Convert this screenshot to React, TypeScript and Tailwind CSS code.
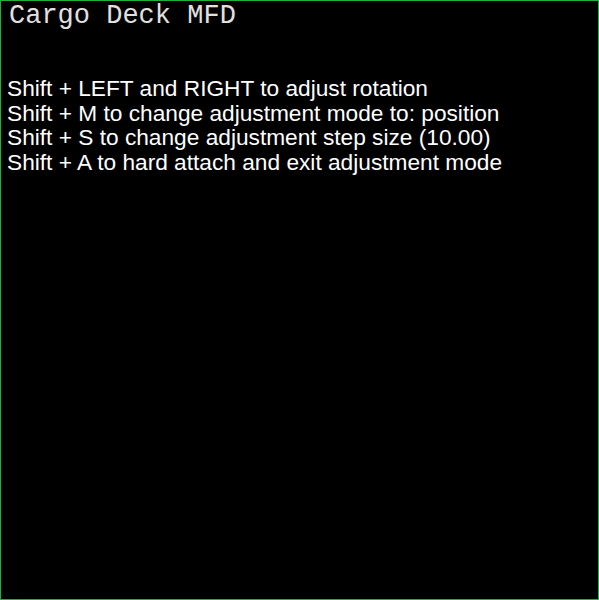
export default function App() {
  const lines = [
    'Shift + LEFT and RIGHT to adjust rotation',
    'Shift + M to change adjustment mode to: position',
    'Shift + S to change adjustment step size (10.00)',
    'Shift + A to hard attach and exit adjustment mode',
  ];

  return (
    <div className="w-[599px] h-[600px] bg-black border border-[#1db33a] text-white overflow-hidden">
      {/* MFD title */}
      <div className="pl-2 pt-[1px] text-[27px] leading-[28px] font-['Liberation_Mono',monospace] font-light text-[#e0e0e0]">
        Cargo Deck MFD
      </div>

      {/* key help */}
      <div className="pl-[6px] pt-[46px] text-[22.7px] leading-[24.7px] font-['Liberation_Sans',Arial,sans-serif]">
        {lines.map((l, i) => (
          <div key={i}>{l}</div>
        ))}
      </div>
    </div>
  );
}
